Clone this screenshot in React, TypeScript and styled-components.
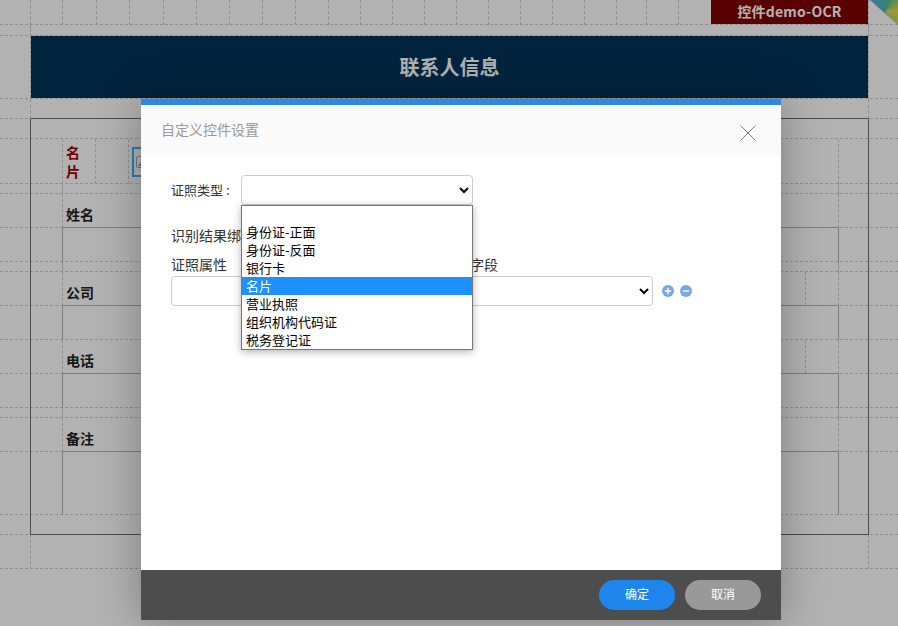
import React from 'react'
import styled, { createGlobalStyle } from 'styled-components'

const GlobalStyle = createGlobalStyle`
  html, body {
    margin: 0;
    height: 100%;
    overflow: hidden;
    background: #fff;
    font-family: "Noto Sans CJK SC", "Liberation Sans", sans-serif;
  }
`

const DASH = '#cdcdcd'
const LINE = '#b4b4b4'

const Page = styled.div`
  position: relative;
  width: 898px;
  height: 626px;
  overflow: hidden;
`

const Row = styled.div<{ $h: number }>`
  box-sizing: border-box;
  height: ${p => p.$h}px;
  border-bottom: 1px dashed ${DASH};
`

const TopRow = styled(Row)`
  display: grid;
  grid-template-columns: 30px 32px 34px 33px 34px 33px 33px 33px 33px 33px 32px 32px 32px 32px 32px 32px 32px 32px 32px 30px 32px 33px 157px 30px;
`

const TopCell = styled.div`
  height: calc(100% + 1px);
  box-sizing: border-box;
  border-left: 1px dashed ${DASH};
  &:first-child {
    border-left: none;
  }
`

const TagCell = styled.div`
  height: 100%;
  background: #800000;
  color: #fff;
  font-size: 14px;
  font-weight: 700;
  line-height: 23px;
  letter-spacing: 0.2px;
  text-align: center;
  white-space: nowrap;
`

const Frame = styled.div<{ $solid?: boolean; $closed?: boolean }>`
  box-sizing: border-box;
  height: calc(100% + 1px);
  margin-left: 30px;
  width: 839px;
  padding: 0 29px 0 31px;
  border-left: 1px ${p => (p.$solid ? 'solid #6e6e6e' : `dashed ${DASH}`)};
  border-right: 1px ${p => (p.$solid ? 'solid #6e6e6e' : `dashed ${DASH}`)};
  border-bottom: ${p => (p.$closed ? '1px solid #6e6e6e' : 'none')};
`

const BannerFrame = styled(Frame)`
  height: 100%;
  padding: 0;
`

const Banner = styled.div`
  display: flex;
  align-items: center;
  justify-content: center;
  height: 100%;
  padding-bottom: 1px;
  box-sizing: border-box;
  background: #003459;
  color: #fff;
  font-size: 20px;
  font-weight: 700;
`

const Cell = styled.div<{ $solid?: boolean; $under?: boolean }>`
  box-sizing: border-box;
  display: flex;
  align-items: center;
  height: 100%;
  border-left: 1px ${p => (p.$solid ? `solid ${LINE}` : `dashed ${DASH}`)};
  border-right: 1px ${p => (p.$solid ? `solid ${LINE}` : `dashed ${DASH}`)};
  border-bottom: ${p => (p.$under ? `1px solid ${LINE}` : 'none')};
`

const FieldLabel = styled.span`
  padding: 8px 0 0 3px;
  color: #222;
  font-size: 14px;
  font-weight: 700;
  line-height: 19px;
`

const Spacer = styled.div`
  flex: 1;
`

const Divider = styled.div`
  width: 32px;
  height: 100%;
  border-left: 1px dashed ${DASH};
`

const CardLabelCell = styled.div`
  box-sizing: border-box;
  width: 33px;
  height: 100%;
  display: flex;
  align-items: center;
  border-right: 1px dashed ${DASH};
`

const CardLabel = styled.span`
  width: 15px;
  padding-left: 3px;
  color: #a00000;
  font-size: 14px;
  font-weight: 700;
  line-height: 19px;
`

const CardBlank = styled.div`
  box-sizing: border-box;
  width: 33px;
  height: 100%;
  border-right: 1px dashed ${DASH};
`

const PhotoBox = styled.div`
  box-sizing: border-box;
  display: flex;
  align-items: center;
  width: 120px;
  height: 30px;
  margin-left: 3px;
  padding-left: 2px;
  border: 2px solid #44b4ff;
`

const Corner = styled.div`
  position: absolute;
  top: 0;
  right: 0;
  width: 28px;
  height: 25px;
  clip-path: polygon(0 0, 100% 0, 100% 100%);
  background: conic-gradient(from 250deg at 55% 45%, #5aa8e0 0deg, #4fb8c8 90deg, #55c090 130deg, #f0dc40 200deg, #5aa8e0 360deg);
`

const Overlay = styled.div`
  position: absolute;
  inset: 0;
  background: rgba(0, 0, 0, 0.3);
`

const Dialog = styled.div`
  position: absolute;
  top: 99px;
  left: 141px;
  display: flex;
  flex-direction: column;
  box-sizing: border-box;
  width: 640px;
  height: 521px;
  border-top: 6px solid #2b88ea;
  background: #fff;
  box-shadow: 0 0 40px rgba(0, 0, 0, 0.3);
`

const TitleBar = styled.div`
  display: flex;
  align-items: center;
  justify-content: space-between;
  box-sizing: border-box;
  height: 50px;
  padding: 0 25px 2px 20px;
  background: #fafafa;
  color: #999;
  font-size: 14px;
`

const CloseIcon = styled.svg`
  width: 16px;
  height: 16px;
  margin-top: 7px;
`

const Body = styled.div`
  flex: 1;
  padding: 20px 0 0 30px;
  color: #333;
  font-size: 14px;
  line-height: 18px;
`

const TypeRow = styled.div`
  display: flex;
  align-items: center;
`

const TypeLabel = styled.label`
  width: 70px;
  font-size: 13px;
`

const Colon = styled.span`
  margin-left: 3px;
`

const NativeSelect = styled.select<{ $w: number }>`
  box-sizing: border-box;
  width: ${p => p.$w}px;
  height: 30px;
  border: 1px solid #ccc;
  border-radius: 4px;
  background: #fff;
  font-size: 13px;
  outline: none;
`

const BindTitle = styled.div`
  margin-top: 21px;
`

const FieldGrid = styled.div`
  display: grid;
  grid-template-columns: 262px 211px auto;
  column-gap: 9px;
  row-gap: 3px;
  justify-content: start;
  align-items: center;
  margin-top: 11px;
`

const RowIcons = styled.div`
  display: flex;
  gap: 6px;
`

const RoundIcon = styled.svg`
  display: block;
  width: 12px;
  height: 12px;
`

const Listbox = styled.div`
  position: absolute;
  top: 100px;
  left: 100px;
  box-sizing: border-box;
  width: 232px;
  height: 145px;
  border: 1px solid #767676;
  background: #fff;
  box-shadow: 0 2px 8px rgba(0, 0, 0, 0.3);
  color: #000;
  font-size: 13px;
`

const ListItem = styled.div<{ $active?: boolean; $blank?: boolean }>`
  height: ${p => (p.$blank ? 17 : 18)}px;
  padding-left: 4px;
  line-height: 17px;
  white-space: nowrap;
  background: ${p => (p.$active ? '#1e90ff' : 'transparent')};
  color: ${p => (p.$active ? '#fff' : '#000')};
`

const Footer = styled.div`
  display: flex;
  align-items: center;
  justify-content: flex-end;
  gap: 10px;
  height: 50px;
  padding-right: 20px;
  background: #4d4d4d;
`

const PillButton = styled.button<{ $primary?: boolean }>`
  width: 76px;
  height: 30px;
  padding: 0 0 3px;
  border: none;
  border-radius: 15px;
  background: ${p => (p.$primary ? '#1e85ec' : '#999')};
  color: #fff;
  font-family: inherit;
  font-size: 12px;
`

const certTypes = ['身份证-正面', '身份证-反面', '银行卡', '名片', '营业执照', '组织机构代码证', '税务登记证']

const InputRows = ({ h = 34, split }: { h?: number; split?: boolean }) => (
  <Row $h={h}>
    <Frame $solid>
      <Cell $solid={!split}>
        {split && <Spacer />}
        {split && <Divider />}
      </Cell>
    </Frame>
  </Row>
)

const LabelRow = ({ text, split }: { text: string; split?: boolean }) => (
  <Row $h={34}>
    <Frame $solid>
      <Cell $under>
        <FieldLabel>{text}</FieldLabel>
        <Spacer />
        {split && <Divider />}
      </Cell>
    </Frame>
  </Row>
)

const GapRow = ({ h = 10 }: { h?: number }) => (
  <Row $h={h}>
    <Frame $solid>
      <Cell />
    </Frame>
  </Row>
)

export default function App () {
  return (
    <Page>
      <GlobalStyle />
      <TopRow $h={25}>
        {Array.from({ length: 22 }, (_, i) => <TopCell key={i} />)}
        <TagCell>控件demo-OCR</TagCell>
        <TopCell />
      </TopRow>
      <Row $h={11}><Frame /></Row>
      <Row $h={63}>
        <BannerFrame>
          <Banner>联系人信息</Banner>
        </BannerFrame>
      </Row>
      <Row $h={20}><Frame $closed /></Row>
      <Row $h={20}><Frame $solid /></Row>
      <Row $h={45}>
        <Frame $solid>
          <Cell>
            <CardLabelCell><CardLabel>名片</CardLabel></CardLabelCell>
            <CardBlank />
            <PhotoBox>
              <svg width="14" height="14" viewBox="0 0 14 14" fill="none">
                <rect x="0.5" y="1.5" width="13" height="11" rx="1.5" stroke="#9aa0d0" />
                <path d="M2 11 L6 5 L9 9 L11 7 L13 11 Z" fill="#9aa0d0" />
              </svg>
            </PhotoBox>
          </Cell>
        </Frame>
      </Row>
      <GapRow />
      <LabelRow text="姓名" />
      <InputRows />
      <GapRow />
      <LabelRow text="公司" split />
      <InputRows />
      <LabelRow text="电话" split />
      <InputRows />
      <GapRow />
      <LabelRow text="备注" />
      <InputRows h={63} />
      <Row $h={20}><Frame $solid $closed /></Row>
      <Row $h={34}><Frame /></Row>

      <Corner />
      <Overlay />

      <Dialog>
        <TitleBar>
          自定义控件设置
          <CloseIcon viewBox="0 0 16 16" fill="none" stroke="#555" strokeWidth="0.8">
            <path d="M0.5 0.5 L15.5 15.5 M15.5 0.5 L0.5 15.5" />
          </CloseIcon>
        </TitleBar>
        <Body>
          <TypeRow>
            <TypeLabel>证照类型<Colon>:</Colon></TypeLabel>
            <NativeSelect $w={232}><option /></NativeSelect>
          </TypeRow>
          <BindTitle>识别结果绑定</BindTitle>
          <FieldGrid>
            <span>证照属性</span>
            <span>表单字段</span>
            <span />
            <NativeSelect $w={262}><option /></NativeSelect>
            <NativeSelect $w={211}><option /></NativeSelect>
            <RowIcons>
              <RoundIcon viewBox="0 0 12 12">
                <circle cx="6" cy="6" r="6" fill="#7aa5e6" />
                <path d="M6 2.8 V9.2 M2.8 6 H9.2" stroke="#fff" strokeWidth="1.4" />
              </RoundIcon>
              <RoundIcon viewBox="0 0 12 12">
                <circle cx="6" cy="6" r="6" fill="#7aa5e6" />
                <path d="M2.8 6 H9.2" stroke="#fff" strokeWidth="1.4" />
              </RoundIcon>
            </RowIcons>
          </FieldGrid>
        </Body>
        <Listbox>
          <ListItem $blank />
          {certTypes.map(t => <ListItem key={t} $active={t === '名片'}>{t}</ListItem>)}
        </Listbox>
        <Footer>
          <PillButton $primary>确定</PillButton>
          <PillButton>取消</PillButton>
        </Footer>
      </Dialog>
    </Page>
  )
}
